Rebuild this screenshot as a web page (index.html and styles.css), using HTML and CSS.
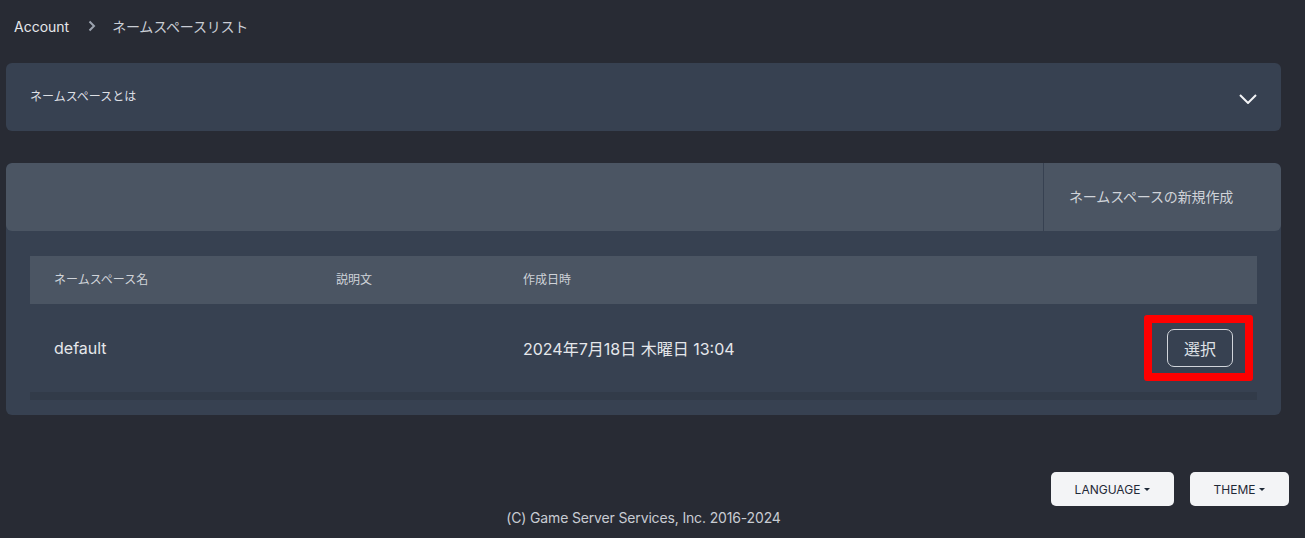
FILE: index.html
```html
<!DOCTYPE html>
<html lang="ja">
<head>
<meta charset="utf-8">
<title>ネームスペースリスト</title>
<link rel="stylesheet" href="styles.css">
</head>
<body>
<div class="page">
  <nav class="breadcrumb">
    <span class="crumb-link">Account</span>
    <svg class="crumb-sep" width="8" height="12" viewBox="0 0 8 12"><path d="M1.5 1.5 L6 6 L1.5 10.5" fill="none" stroke="#9ca3af" stroke-width="2"/></svg>
    <span class="crumb-current">ネームスペースリスト</span>
  </nav>

  <main class="content">
    <section class="accordion">
      <span class="accordion-title">ネームスペースとは</span>
      <svg class="accordion-chevron" width="18" height="10" viewBox="0 0 18 10"><path d="M1 1 L9 9 L17 1" fill="none" stroke="#f3f4f6" stroke-width="2"/></svg>
    </section>

    <section class="card">
      <div class="card-header">
        <div class="card-header-fill"></div>
        <div class="card-header-action">ネームスペースの新規作成</div>
      </div>
      <div class="card-body">
        <div class="table">
          <div class="row head">
            <div class="cell c-name">ネームスペース名</div>
            <div class="cell c-desc">説明文</div>
            <div class="cell c-date">作成日時</div>
            <div class="cell c-act"></div>
          </div>
          <div class="row data">
            <div class="cell c-name">default</div>
            <div class="cell c-desc"></div>
            <div class="cell c-date">2024年7月18日 木曜日 13:04</div>
            <div class="cell c-act">
              <span class="highlight"><button class="select-btn">選択</button></span>
            </div>
          </div>
          <div class="scroll-track"></div>
        </div>
      </div>
    </section>
  </main>

  <footer class="footer">
    <div class="footer-buttons">
      <button class="footer-btn">LANGUAGE<span class="caret"></span></button>
      <button class="footer-btn">THEME<span class="caret"></span></button>
    </div>
    <div class="copyright">(C) Game Server Services, Inc. 2016-2024</div>
  </footer>
</div>
</body>
</html>
```

FILE: styles.css
```css
* { box-sizing: border-box; }
html, body { margin: 0; padding: 0; }
body {
  background: #282b34;
  font-family: "Inter", "Noto Sans CJK JP", sans-serif;
  color: #e5e7eb;
  width: 1305px;
  height: 538px;
  overflow: hidden;
}
.page { display: flex; flex-direction: column; }

.breadcrumb {
  display: flex;
  align-items: center;
  height: 54px;
  padding: 0 14px 2px;
  font-size: 14px;
}
.crumb-link { color: #e5e7eb; }
.crumb-sep { margin: 0 16px 0 19px; }
.crumb-current { color: #c9cdd4; letter-spacing: -0.2px; }

.content {
  display: flex;
  flex-direction: column;
  gap: 32px;
  padding: 9px 24px 0 6px;
}

.accordion {
  height: 68px;
  background: #374151;
  border-radius: 6px;
  display: flex;
  align-items: center;
  justify-content: space-between;
  padding: 0 24px 3px 24px;
}
.accordion-title { font-size: 12px; color: #dcdfe4; }
.accordion-chevron { margin-top: 6px; }

.card {
  background: #374151;
  border-radius: 6px;
  overflow: hidden;
}
.card-header {
  display: flex;
  height: 68px;
  background: #4b5563;
  border-radius: 6px;
}
.card-header-fill { flex: 1; }
.card-header-action {
  width: 238px;
  border-left: 1px solid #374151;
  display: flex;
  align-items: center;
  padding-left: 25px;
  padding-bottom: 2px;
  font-size: 14px;
  color: #cfd3d9;
  letter-spacing: -0.15px;
}
.card-body { padding: 25px 24px 15px; }

.table { display: flex; flex-direction: column; }
.row { display: flex; align-items: center; }
.row.head { height: 48px; background: #4b5563; font-size: 12px; color: #cfd3d9; padding-bottom: 3px; }
.row.data { height: 88px; background: #374151; font-size: 16px; color: #e5e7eb; }
.cell { padding-left: 24px; }
.c-name { width: 282px; }
.c-desc { width: 187px; }
.c-date { flex: 1; }
.c-act { display: flex; justify-content: flex-end; padding-right: 4px; }
.scroll-track { height: 8px; background: #323b49; }

.highlight {
  display: inline-flex;
  border: 8px solid #ff0000;
  border-radius: 3px;
  padding: 6px 12px 6px 15px;
}
.select-btn {
  font-family: "Inter", "Noto Sans CJK JP", sans-serif;
  font-size: 16px;
  color: #dfe2e7;
  background: transparent;
  border: 1px solid #d1d5db;
  border-radius: 7px;
  width: 66px;
  height: 38px;
  padding: 0;
}

.footer {
  display: flex;
  flex-direction: column;
  margin-top: 57px;
}
.footer-buttons {
  display: flex;
  justify-content: flex-end;
  gap: 16px;
  padding-right: 16px;
}
.footer-btn {
  font-family: "Inter", sans-serif;
  font-size: 12px;
  color: #1f2937;
  background: #f3f4f6;
  border: none;
  border-radius: 5px;
  height: 34px;
  padding: 0 0;
  display: inline-flex;
  align-items: center;
  justify-content: center;
}
.footer-btn:first-child { width: 123px; }
.footer-btn:last-child { width: 99px; }
.caret {
  display: inline-block;
  margin-left: 4px;
  border-left: 3px solid transparent;
  border-right: 3px solid transparent;
  border-top: 3px solid #1f2937;
}
.copyright {
  text-align: center;
  font-size: 14px;
  color: #c8ccd3;
  padding-right: 18px;
  margin-top: 3px;
  letter-spacing: -0.15px;
}
```
